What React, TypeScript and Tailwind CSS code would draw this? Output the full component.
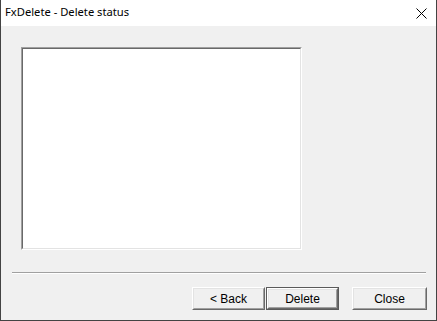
import type { ReactNode } from 'react';

function Button({ children, isDefault = false, width }: { children: ReactNode; isDefault?: boolean; width: string }) {
    const face = (
        <div className="flex-1 flex border border-t-white border-l-white border-b-[#696969] border-r-[#696969]">
            <div className="flex-1 flex items-center justify-center border border-t-[#e3e3e3] border-l-[#e3e3e3] border-b-[#a0a0a0] border-r-[#a0a0a0] bg-[#f0f0f0] text-[12px] text-black">
                {children}
            </div>
        </div>
    );

    return (
        <div className={`${width} h-[23px] flex ${isDefault ? 'border border-[#5a5a5a]' : ''}`}>
            {face}
        </div>
    );
}

export default function App() {
    return (
        <div
            className="w-[437px] h-[321px] bg-[#f0f0f0] border-x border-b border-[#434343] flex flex-col"
            style={{ fontFamily: '"Liberation Sans", Arial, sans-serif' }}
        >
            {/* Title bar */}
            <div className="h-[26px] bg-white flex items-center justify-between pl-[4px] shrink-0">
                <span className="text-[11.2px] text-black pb-[1px]" style={{ fontFamily: '"Noto Sans", sans-serif' }}>
                    FxDelete - Delete status
                </span>
                <svg width="11" height="11" viewBox="0 0 11 11" className="mr-[9px]">
                    <path d="M0.5 0.5 L10.5 10.5 M10.5 0.5 L0.5 10.5" stroke="#000" strokeWidth="1" />
                </svg>
            </div>

            {/* Status list */}
            <div className="ml-[20px] mt-[21px] w-[281px] h-[203px] flex border border-t-[#a0a0a0] border-l-[#a0a0a0] border-b-white border-r-white">
                <div className="flex-1 bg-white border border-t-[#696969] border-l-[#696969] border-b-[#e3e3e3] border-r-[#e3e3e3]" />
            </div>

            {/* Separator */}
            <div className="ml-[11px] mt-[22px] w-[414px] border-t border-t-[#a0a0a0] border-b border-b-white" />

            {/* Buttons */}
            <div className="mt-[13px] flex justify-end pr-[9px]">
                <Button width="w-[73px]">&lt; Back</Button>
                <div className="w-[1px]" />
                <Button width="w-[73px]" isDefault>Delete</Button>
                <div className="w-[13px]" />
                <Button width="w-[75px]">Close</Button>
            </div>
        </div>
    );
}
